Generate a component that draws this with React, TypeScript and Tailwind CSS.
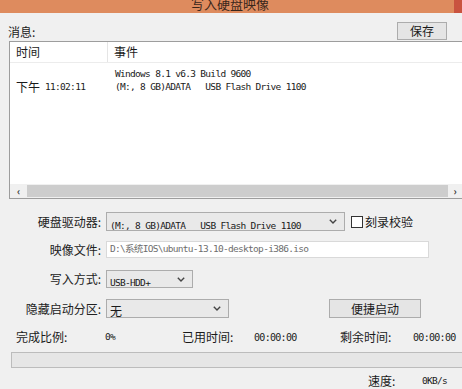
import React from "react";

const Chevron = () => (
  <svg width="8" height="5" viewBox="0 0 8 5" className="shrink-0">
    <polyline points="0.8,0.8 4,4 7.2,0.8" fill="none" stroke="#444" strokeWidth="1.4" />
  </svg>
);

const MONO = "[font-family:'DejaVu_Sans_Mono','Noto_Sans_CJK_SC',monospace] text-[9.5px] tracking-[-0.7px]";

function Select({ w, children }: { w: string; children: React.ReactNode }) {
  return (
    <div className={`${w} h-full flex items-center border border-[#acacac] bg-[#e9e9e9] pl-[3px] pr-[7px]`}>
      <div className="flex-1 min-w-0 whitespace-pre overflow-hidden">{children}</div>
      <Chevron />
    </div>
  );
}

function Label({ children }: { children: React.ReactNode }) {
  return <div className="w-[104px] pr-[3px] text-right text-[12px] leading-none text-[#222] shrink-0">{children}</div>;
}

export default function App() {
  return (
    <div className="w-[462px] h-[389px] bg-[#f0f0f0] overflow-hidden flex flex-col [font-family:'Noto_Sans_CJK_SC',sans-serif] text-[#1a1a1a]">
      {/* title bar */}
      <div className="h-[13px] shrink-0 bg-[#de8b5e] relative overflow-hidden flex justify-center">
        <div className="text-[13px] leading-none mt-[-3px] text-[#3a261b] ml-[-2px]">写入硬盘映像</div>
        <div className="absolute right-0 top-0 w-[8px] h-[13px] bg-[#c9533f]" />
      </div>
      {/* header */}
      <div className="h-[28px] shrink-0 flex items-end">
        <div className="ml-[8px] mb-[3px] text-[12px] leading-none">消息:</div>
        <div className="ml-auto mr-[15px] mb-[1px] w-[50px] h-[18px] border border-[#acacac] bg-[#e5e5e5] flex items-center justify-center text-[12px] leading-none">
          保存
        </div>
      </div>
      {/* list */}
      <div className="ml-[9px] h-[158px] shrink-0 border-l border-t border-b border-[#9d9d9d] bg-white flex flex-col">
        <div className="h-[21px] shrink-0 flex items-center border-b border-[#ececec] text-[12px] leading-none">
          <div className="w-[98px] pl-[6px] h-full flex items-center border-r border-[#e5e5e5]">时间</div>
          <div className="pl-[6px]">事件</div>
        </div>
        <div className="flex mt-[4px] h-[26px] items-end">
          <div className="w-[98px] pl-[6px] flex items-center h-[13px] whitespace-pre">
            <span className="text-[12px] leading-none">下午</span>
            <span className={`${MONO} leading-none ml-[5px]`}>11:02:11</span>
          </div>
          <div className={`${MONO} pl-[7px] leading-[13px] whitespace-pre`}>
            <div>Windows 8.1 v6.3 Build 9600</div>
            <div>(M:, 8 GB)ADATA   USB Flash Drive 1100</div>
          </div>
        </div>
        <div className="flex-1" />
        <div className="h-[14px] shrink-0 flex items-stretch bg-[#f0f0f0]">
          <div className="w-[17px] flex items-center justify-center text-[10px] font-bold text-[#333] leading-none">‹</div>
          <div className="flex-1 bg-[#cdcdcd] my-[1px]" />
          <div className="w-[14px] flex items-center justify-center text-[10px] font-bold text-[#333] leading-none">›</div>
        </div>
      </div>
      {/* form */}
      <div className="flex items-center h-[19px] mt-[13px] shrink-0">
        <Label>硬盘驱动器:</Label>
        <div className="ml-[2px] h-full flex items-center">
          <Select w="w-[239px]">
            <span className={MONO}>(M:, 8 GB)ADATA   USB Flash Drive 1100</span>
          </Select>
        </div>
        <div className="ml-[6px] w-[12px] h-[12px] border border-[#333] bg-white" />
        <div className="ml-[2px] text-[12px] leading-none">刻录校验</div>
      </div>
      <div className="flex items-center h-[17px] mt-[10px] shrink-0">
        <Label>映像文件:</Label>
        <div className={`ml-[2px] w-[323px] h-full border border-[#d9d9d9] bg-white flex items-center pl-[3px] text-[#6d6d6d] whitespace-pre ${MONO}`}>
          D:\系统IOS\ubuntu-13.10-desktop-i386.iso
        </div>
      </div>
      <div className="flex items-center h-[18px] mt-[12px] shrink-0">
        <Label>写入方式:</Label>
        <div className="ml-[2px] h-full flex items-center">
          <Select w="w-[87px]">
            <span className={MONO}>USB-HDD+</span>
          </Select>
        </div>
      </div>
      <div className="flex items-center h-[19px] mt-[11px] shrink-0">
        <Label>隐藏启动分区:</Label>
        <div className="ml-[2px] h-full flex items-center">
          <Select w="w-[123px]">
            <span className="text-[12px] leading-none">无</span>
          </Select>
        </div>
        <div className="ml-[100px] w-[92px] h-full border border-[#acacac] bg-[#e5e5e5] flex items-center justify-center text-[12px] leading-none">
          便捷启动
        </div>
      </div>
      <div className="flex items-center h-[14px] mt-[12px] shrink-0 pl-[16px] whitespace-pre">
        <div className="w-[89px] text-[12px] leading-none">完成比例:</div>
        <div className={`w-[77px] ${MONO}`}>0%</div>
        <div className="w-[72px] text-[12px] leading-none">已用时间:</div>
        <div className={`w-[86px] ${MONO} text-[10px]`}>00:00:00</div>
        <div className="w-[73px] text-[12px] leading-none">剩余时间:</div>
        <div className={`${MONO} text-[10px]`}>00:00:00</div>
      </div>
      <div className="ml-[11px] h-[16px] mt-[8px] shrink-0 border-l border-t border-b border-[#bcbcbc] bg-[#e6e6e6]" />
      <div className="flex items-center h-[14px] mt-[6px] shrink-0 whitespace-pre">
        <div className="ml-[368px] w-[54px] text-[12px] leading-none">速度:</div>
        <div className={MONO}>0KB/s</div>
      </div>
    </div>
  );
}
